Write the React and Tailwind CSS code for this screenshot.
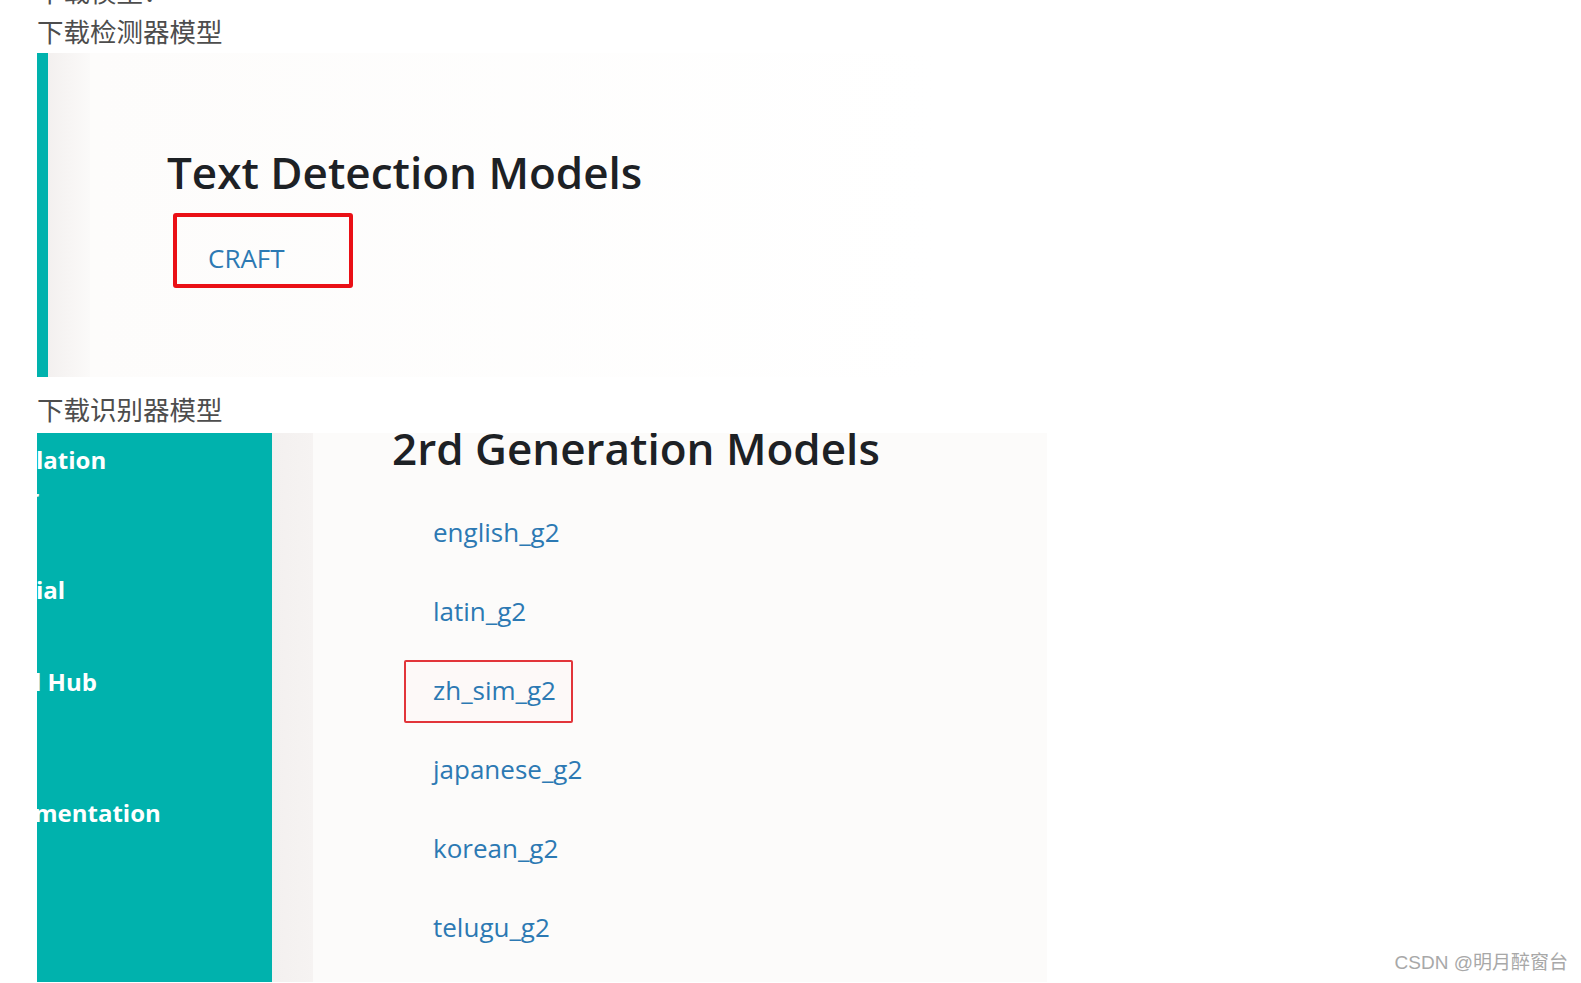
import React from 'react'

const models = ['english_g2', 'latin_g2', 'zh_sim_g2', 'japanese_g2', 'korean_g2', 'telugu_g2']

const App = () => {
  return (
    <div className="relative w-full h-[983px] overflow-hidden bg-white pl-[37px] font-['Open_Sans',sans-serif]">
      {/* clipped line from above */}
      <div className="h-[5px] overflow-hidden">
        <p className="-mt-[23px] text-[26.5px] leading-[28px] text-[#4d4d4d] font-['Noto_Sans_CJK_SC',sans-serif]">下载模型：</p>
      </div>

      <p className="mt-[12px] text-[26.5px] leading-[28px] text-[#4d4d4d] font-['Noto_Sans_CJK_SC',sans-serif]">下载检测器模型</p>

      {/* Screenshot 1 */}
      <div className="mt-[8px] flex h-[324px] w-[900px] overflow-hidden">
        <div className="w-[11px] bg-[#00b2ad]"></div>
        <div className="w-[42px] bg-gradient-to-r from-[#f3f0ef] to-[#fbfaf9]"></div>
        <div className="flex-1 bg-gradient-to-r from-[#fdfcfb] to-white pl-[77px] pt-[97px]">
          <h2 className="text-[44px] leading-[44px] font-semibold text-[#1d2125]">Text Detection Models</h2>
          <div className="mt-[19px] ml-[6px] w-[180px] h-[75px] border-4 border-[#ea1016] rounded-[3px] pl-[31px] pt-[28px]">
            <span className="text-[26px] leading-[26px] text-[#2c79b3] block">CRAFT</span>
          </div>
        </div>
      </div>

      <p className="mt-[18px] text-[26.5px] leading-[28px] text-[#4d4d4d] font-['Noto_Sans_CJK_SC',sans-serif]">下载识别器模型</p>

      {/* Screenshot 2 */}
      <div className="mt-[10px] flex h-[549px] w-[1250px] overflow-hidden">
        {/* sidebar */}
        <div className="w-[235px] bg-[#00b2ad] text-white font-bold text-[24px] leading-[28px] flex flex-col">
          <span className="mt-[13px] -ml-[1px]">lation</span>
          <span className="mt-[14px] -ml-[6px] text-[18px] leading-[18px]">r</span>
          <span className="mt-[70px] -ml-[1px]">ial</span>
          <span className="mt-[64px] -ml-[3px]">l Hub</span>
          <span className="mt-[103px] -ml-[3px]">mentation</span>
        </div>
        <div className="w-[41px] bg-gradient-to-r from-[#f3f0ef] to-[#f6f3f2]"></div>
        <div className="w-[734px] bg-[#fcfbfa] pl-[79px]">
          <h2 className="-mt-[7px] text-[44px] leading-[44px] font-semibold text-[#1d2125]">2rd Generation Models</h2>
          <ul className="mt-[32px] ml-[12px] flex flex-col gap-[16px]">
            {models.map((m) => (
              <li
                key={m}
                className={
                  m === 'zh_sim_g2'
                    ? 'w-[169px] h-[63px] border-2 border-[#e2353a] rounded-[2px] bg-[#fdf9f8] pl-[27px] pt-[15px]'
                    : 'w-[169px] h-[63px] border-2 border-transparent pl-[27px] pt-[15px]'
                }
              >
                <span className="block text-[26px] leading-[26px] text-[#2c79b3]">{m}</span>
              </li>
            ))}
          </ul>
        </div>
        <div className="flex-1 bg-white"></div>
      </div>

      {/* watermark */}
      <div className="absolute right-[13px] bottom-[9px] text-[19px] leading-[22px] text-[#a8a8a8] font-['Liberation_Sans','Noto_Sans_CJK_SC',sans-serif]">
        CSDN @明月醉窗台
      </div>
    </div>
  )
}

export default App
